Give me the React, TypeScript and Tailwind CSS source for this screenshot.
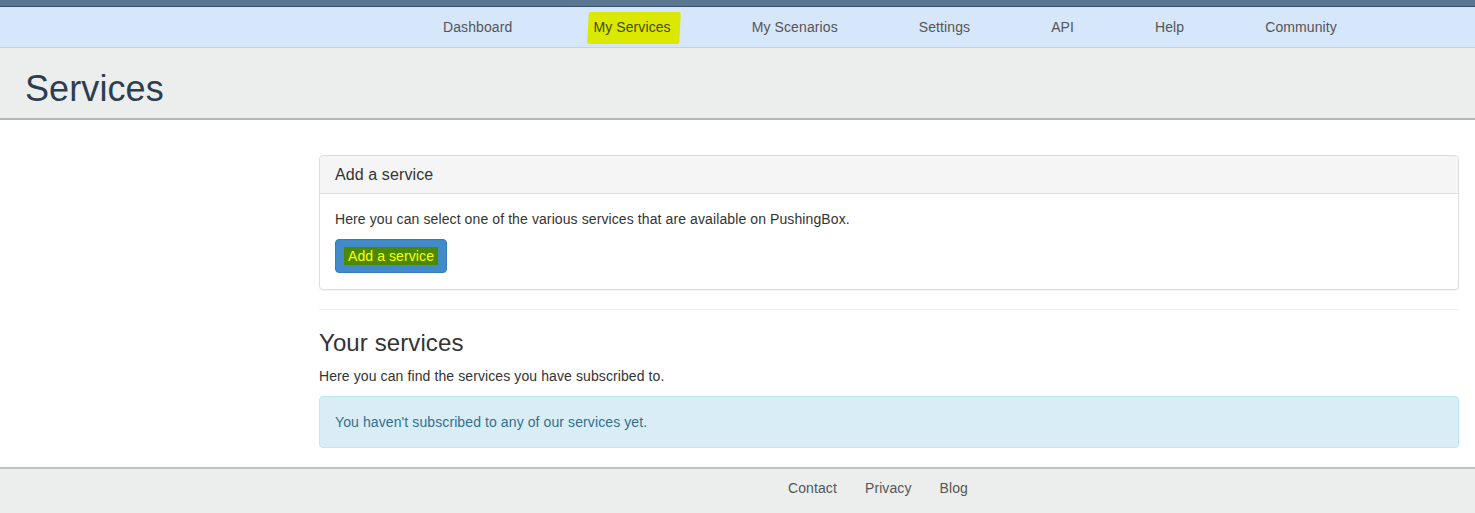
export default function App() {
  const nav = ["Dashboard", "My Services", "My Scenarios", "Settings", "API", "Help", "Community"];

  return (
    <div className="min-h-[513px] bg-white text-[14px] text-[#333] tracking-[0.1px] flex flex-col" style={{ fontFamily: "Arial, 'Liberation Sans', sans-serif" }}>
      {/* top strip */}
      <div className="h-[7px] bg-[#5a7691] border-b border-[#34506f]" />

      {/* nav */}
      <div className="h-[41px] bg-[#d6e6fb] border-b border-[#c3d4ea] flex items-center">
        <div className="ml-[443px] flex items-center gap-[81px]">
          {nav.map((n) =>
            n === "My Services" ? (
              <span key={n} className="relative text-[#555]">
                <span className="absolute -left-[5px] -right-[10px] -top-[5px] -bottom-[6px] bg-[#dbe800] rounded-[2px] -skew-x-3" />
                <span className="relative text-[#4a4a10]">{n}</span>
              </span>
            ) : (
              <span key={n} className="text-[#555]">
                {n}
              </span>
            )
          )}
        </div>
      </div>

      {/* page header */}
      <div className="h-[72px] bg-[#eceeed] border-b-2 border-[#b5b5b5] flex items-center">
        <h1 className="ml-[25px] text-[36px] text-[#2c3e50] leading-none mt-[12px]">Services</h1>
      </div>

      {/* content */}
      <div className="ml-[319px] w-[1140px] pt-[35px] pb-[19px]">
        <div className="border border-[#ddd] rounded-[4px] shadow-[0_1px_1px_rgba(0,0,0,0.05)]">
          <div className="h-[38px] bg-[#f5f5f5] border-b border-[#ddd] rounded-t-[4px] px-[15px] flex items-center text-[16px] text-[#333]">
            Add a service
          </div>
          <div className="px-[15px] pt-[15px] pb-[16px]">
            <p className="text-[#333] leading-[20px]">Here you can select one of the various services that are available on PushingBox.</p>
            <button className="mt-[10px] h-[34px] w-[112px] bg-[#428bca] border border-[#357ebd] rounded-[4px] flex items-center justify-center">
              <span className="bg-[#4b8a00] text-[#ffff00] px-[4px] leading-[18px]">Add a service</span>
            </button>
          </div>
        </div>

        <hr className="mt-[19px] border-0 border-t border-[#eee]" />

        <h3 className="mt-[20px] text-[24px] leading-[26px] text-[#333]">Your services</h3>
        <p className="mt-[10px] leading-[20px] text-[#333]">Here you can find the services you have subscribed to.</p>

        <div className="mt-[10px] h-[52px] bg-[#d9edf7] border border-[#bce8f1] rounded-[4px] px-[15px] flex items-center text-[#31708f]">
          You haven't subscribed to any of our services yet.
        </div>
      </div>

      {/* footer */}
      <div className="flex-1 bg-[#eceeed] border-t-2 border-[#c0c0c0] flex items-start pt-[9px]">
        <div className="ml-[788px] flex gap-[28px] text-[#555]">
          <span>Contact</span>
          <span>Privacy</span>
          <span>Blog</span>
        </div>
      </div>
    </div>
  );
}
